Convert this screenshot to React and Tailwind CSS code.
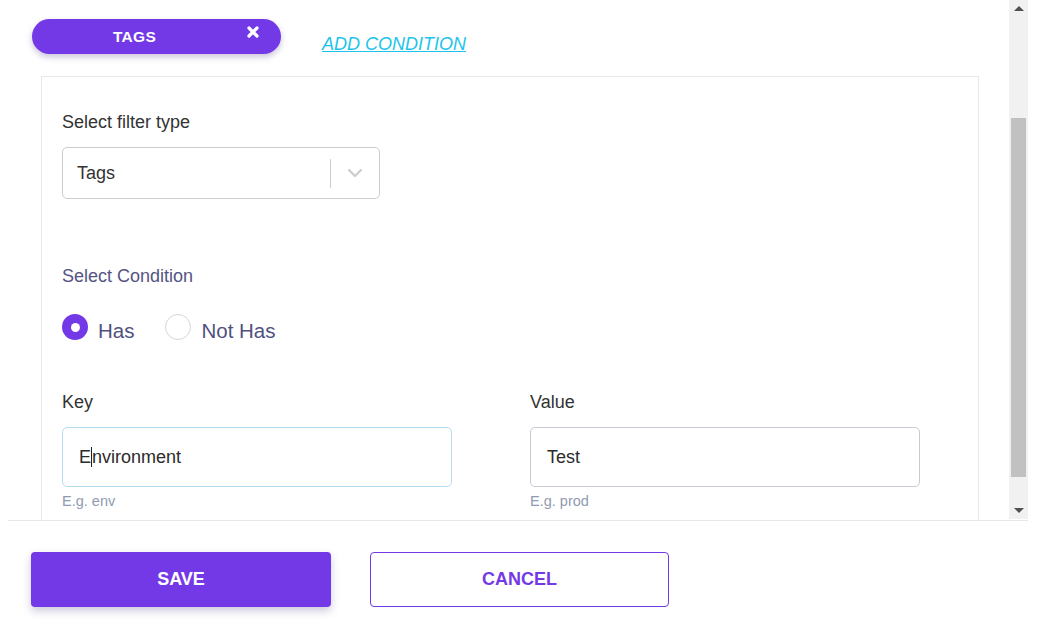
import React from "react";

const font = { fontFamily: '"Liberation Sans", Arial, sans-serif' };

const Chevron = () => (
  <svg width="16" height="10" viewBox="0 0 16 10" fill="none">
    <path d="M2 2 L8 8 L14 2" stroke="#cccccc" strokeWidth="2.2" strokeLinecap="round" strokeLinejoin="round" />
  </svg>
);

const Times = () => (
  <svg width="12" height="12" viewBox="0 0 12 12" fill="none">
    <path d="M2 2 L10 10 M10 2 L2 10" stroke="white" strokeWidth="3.2" strokeLinecap="round" />
  </svg>
);

const Radio = ({ checked, label }) => (
  <div className="flex items-center h-[26px]">
    {checked ? (
      <div className="w-[26px] h-[26px] rounded-full bg-[#7439e7] flex items-center justify-center">
        <div className="w-[9px] h-[9px] rounded-full bg-white" />
      </div>
    ) : (
      <div className="w-[26px] h-[26px] rounded-full border border-[#d3d6de] bg-white" />
    )}
    <span className="relative top-[4px] ml-[10px] text-[20.5px] leading-[24px] text-[#4f5180]">{label}</span>
  </div>
);

const TextField = ({ label, hint, focused, children }) => (
  <div className="w-[390px]">
    <div className="text-[18px] leading-[22px] text-[#333333]">{label}</div>
    <div
      className={
        focused
          ? "mt-[14px] h-[60px] rounded-[5px] border border-[#b5dcf1] flex items-center px-[16px] text-[18px] text-[#2b2b2b]"
          : "mt-[14px] h-[60px] rounded-[5px] border border-[#c6cad3] flex items-center px-[16px] text-[18px] text-[#2b2b2b]"
      }
    >
      {children}
    </div>
    <div className="mt-[5px] text-[14.5px] leading-[18px] text-[#909bb1]">{hint}</div>
  </div>
);

const Scrollbar = () => (
  <div className="w-[19px] h-[519px] bg-[#f1f1f1] flex flex-col items-center">
    <div className="h-[17px] flex items-center justify-center">
      <div className="w-0 h-0 border-l-[5px] border-r-[5px] border-b-[5px] border-l-transparent border-r-transparent border-b-[#505050]" />
    </div>
    <div className="mt-[101px] w-[15px] h-[359px] bg-[#c1c1c1]" />
    <div className="flex-1 flex items-end pb-[6px]">
      <div className="w-0 h-0 border-l-[5px] border-r-[5px] border-t-[5px] border-l-transparent border-r-transparent border-t-[#505050]" />
    </div>
  </div>
);

export default function App() {
  return (
    <div className="w-[1039px] h-[637px] bg-white overflow-hidden" style={font}>
      <div className="ml-[8px] w-[1020px] h-[521px] flex border-b border-[#e8e8e8]">
        <div className="flex-1 h-[520px] overflow-hidden pl-[2px]">
          <div className="flex items-start pt-[19px] pl-[22px]">
            <div className="relative w-[249px] h-[35px] rounded-full bg-[#7439e7] shadow-[0_3px_6px_rgba(60,40,120,0.28)] flex items-center justify-center">
              <span className="text-white font-bold text-[15.5px] tracking-[0.3px] -ml-[44px]">TAGS</span>
              <span className="absolute left-[215px] top-[7px]">
                <Times />
              </span>
            </div>
            <a className="ml-[41px] mt-[14px] text-[18px] leading-[22px] italic underline text-[#1ec4ea]">
              ADD CONDITION
            </a>
          </div>
          <div className="ml-[31px] mt-[21px] w-[938px] h-[500px] border border-[#e8e8e8] pl-[20px] pt-[34px]">
            <div className="text-[18px] leading-[22px] text-[#333333]">Select filter type</div>
            <div className="mt-[14px] w-[318px] h-[52px] rounded-[5px] border border-[#cccccc] flex items-center">
              <span className="flex-1 pl-[14px] text-[18px] text-[#333333]">Tags</span>
              <div className="w-px h-[29px] bg-[#cccccc]" />
              <div className="w-[48px] flex items-center justify-center">
                <Chevron />
              </div>
            </div>
            <div className="mt-[66px] text-[18px] leading-[22px] text-[#545482]">Select Condition</div>
            <div className="mt-[27px] flex items-center gap-[31px]">
              <Radio checked label="Has" />
              <Radio label="Not Has" />
            </div>
            <div className="mt-[51px] flex gap-[78px]">
              <TextField label="Key" hint="E.g. env" focused>
                <span>E</span>
                <span className="inline-block w-px h-[20px] bg-[#222222]" />
                <span>nvironment</span>
              </TextField>
              <TextField label="Value" hint="E.g. prod">
                <span>Test</span>
              </TextField>
            </div>
          </div>
        </div>
        <Scrollbar />
      </div>
      <div className="flex pl-[31px] pt-[31px] gap-[39px]">
        <button className="w-[300px] h-[55px] rounded-[4px] bg-[#7439e7] text-white font-bold text-[18px] shadow-[0_4px_8px_rgba(60,40,120,0.25)]">
          SAVE
        </button>
        <button className="w-[299px] h-[55px] rounded-[4px] border border-[#7439e7] bg-white text-[#7439e7] font-bold text-[18px]">
          CANCEL
        </button>
      </div>
    </div>
  );
}
